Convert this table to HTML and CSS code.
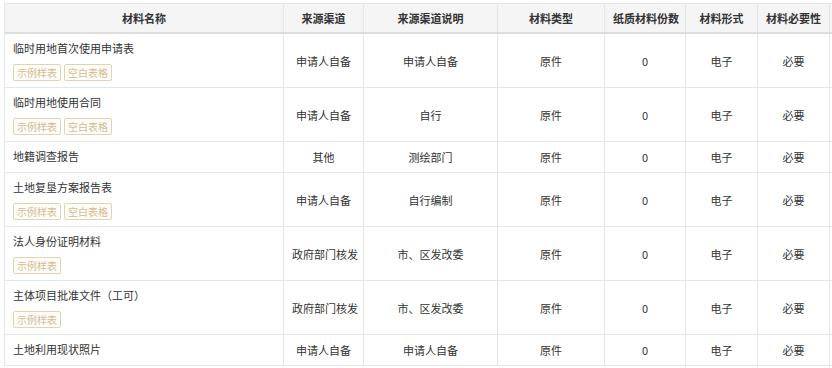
FILE: index.html
```html
<!DOCTYPE html>
<html lang="zh-CN">
<head>
<meta charset="utf-8">
<title>材料清单</title>
<link rel="stylesheet" href="styles.css">
</head>
<body>
<div class="wrap">
<table class="mat-table">
  <colgroup>
    <col class="c-name"><col class="c-src"><col class="c-desc"><col class="c-type"><col class="c-num"><col class="c-form"><col class="c-need"><col class="c-op">
  </colgroup>
  <thead>
    <tr>
      <th>材料名称</th><th>来源渠道</th><th>来源渠道说明</th><th>材料类型</th><th>纸质材料份数</th><th>材料形式</th><th>材料必要性</th><th></th>
    </tr>
  </thead>
  <tbody>
    <tr>
      <td class="name"><div class="title">临时用地首次使用申请表</div><div class="tags"><span class="tag">示例样表</span><span class="tag">空白表格</span></div></td>
      <td>申请人自备</td><td>申请人自备</td><td>原件</td><td>0</td><td>电子</td><td>必要</td><td></td>
    </tr>
    <tr>
      <td class="name"><div class="title">临时用地使用合同</div><div class="tags"><span class="tag">示例样表</span><span class="tag">空白表格</span></div></td>
      <td>申请人自备</td><td>自行</td><td>原件</td><td>0</td><td>电子</td><td>必要</td><td></td>
    </tr>
    <tr>
      <td class="name"><div class="title">地籍调查报告</div></td>
      <td>其他</td><td>测绘部门</td><td>原件</td><td>0</td><td>电子</td><td>必要</td><td></td>
    </tr>
    <tr>
      <td class="name"><div class="title">土地复垦方案报告表</div><div class="tags"><span class="tag">示例样表</span><span class="tag">空白表格</span></div></td>
      <td>申请人自备</td><td>自行编制</td><td>原件</td><td>0</td><td>电子</td><td>必要</td><td></td>
    </tr>
    <tr>
      <td class="name"><div class="title">法人身份证明材料</div><div class="tags"><span class="tag">示例样表</span></div></td>
      <td>政府部门核发</td><td>市、区发改委</td><td>原件</td><td>0</td><td>电子</td><td>必要</td><td></td>
    </tr>
    <tr>
      <td class="name"><div class="title">主体项目批准文件（工可）</div><div class="tags"><span class="tag">示例样表</span></div></td>
      <td>政府部门核发</td><td>市、区发改委</td><td>原件</td><td>0</td><td>电子</td><td>必要</td><td></td>
    </tr>
    <tr>
      <td class="name"><div class="title">土地利用现状照片</div></td>
      <td>申请人自备</td><td>申请人自备</td><td>原件</td><td>0</td><td>电子</td><td>必要</td><td></td>
    </tr>
  </tbody>
</table>
</div>
</body>
</html>
```
FILE: styles.css
```css
html, body {
  margin: 0;
  padding: 0;
  background: #fff;
  overflow: hidden;
}
body {
  font-family: "Noto Sans CJK SC", "Noto Sans", sans-serif;
  font-size: 11px;
  color: #333;
}
.wrap {
  padding: 3px 0 0 4px;
  width: 1000px;
}
.mat-table {
  border-collapse: collapse;
  table-layout: fixed;
  width: 905px;
}
.c-name { width: 279px; }
.c-src { width: 80px; }
.c-desc { width: 134px; }
.c-type { width: 107px; }
.c-num { width: 81px; }
.c-form { width: 72px; }
.c-need { width: 72px; }
.c-op { width: 80px; }
.mat-table th,
.mat-table td {
  border: 1px solid #e6e6e6;
  text-align: center;
  vertical-align: middle;
  line-height: 20px;
  padding: 4px 8px;
  white-space: nowrap;
  overflow: hidden;
}
.mat-table th {
  background: #f5f5f5;
  font-weight: bold;
  color: #333;
  border-bottom: 2px solid #dedede;
}
.mat-table td.name {
  text-align: left;
  padding: 4px 8px 6px 8px;
}
.title {
  line-height: 20px;
}
.tags {
  display: flex;
  gap: 3px;
  margin-top: 6px;
}
.tag {
  display: inline-block;
  box-sizing: border-box;
  height: 17px;
  line-height: 15px;
  padding: 0 3px;
  font-size: 10px;
  color: #d4bb90;
  border: 1px solid #e4d3b2;
  border-radius: 2px;
  background: #fffdf9;
}
```
